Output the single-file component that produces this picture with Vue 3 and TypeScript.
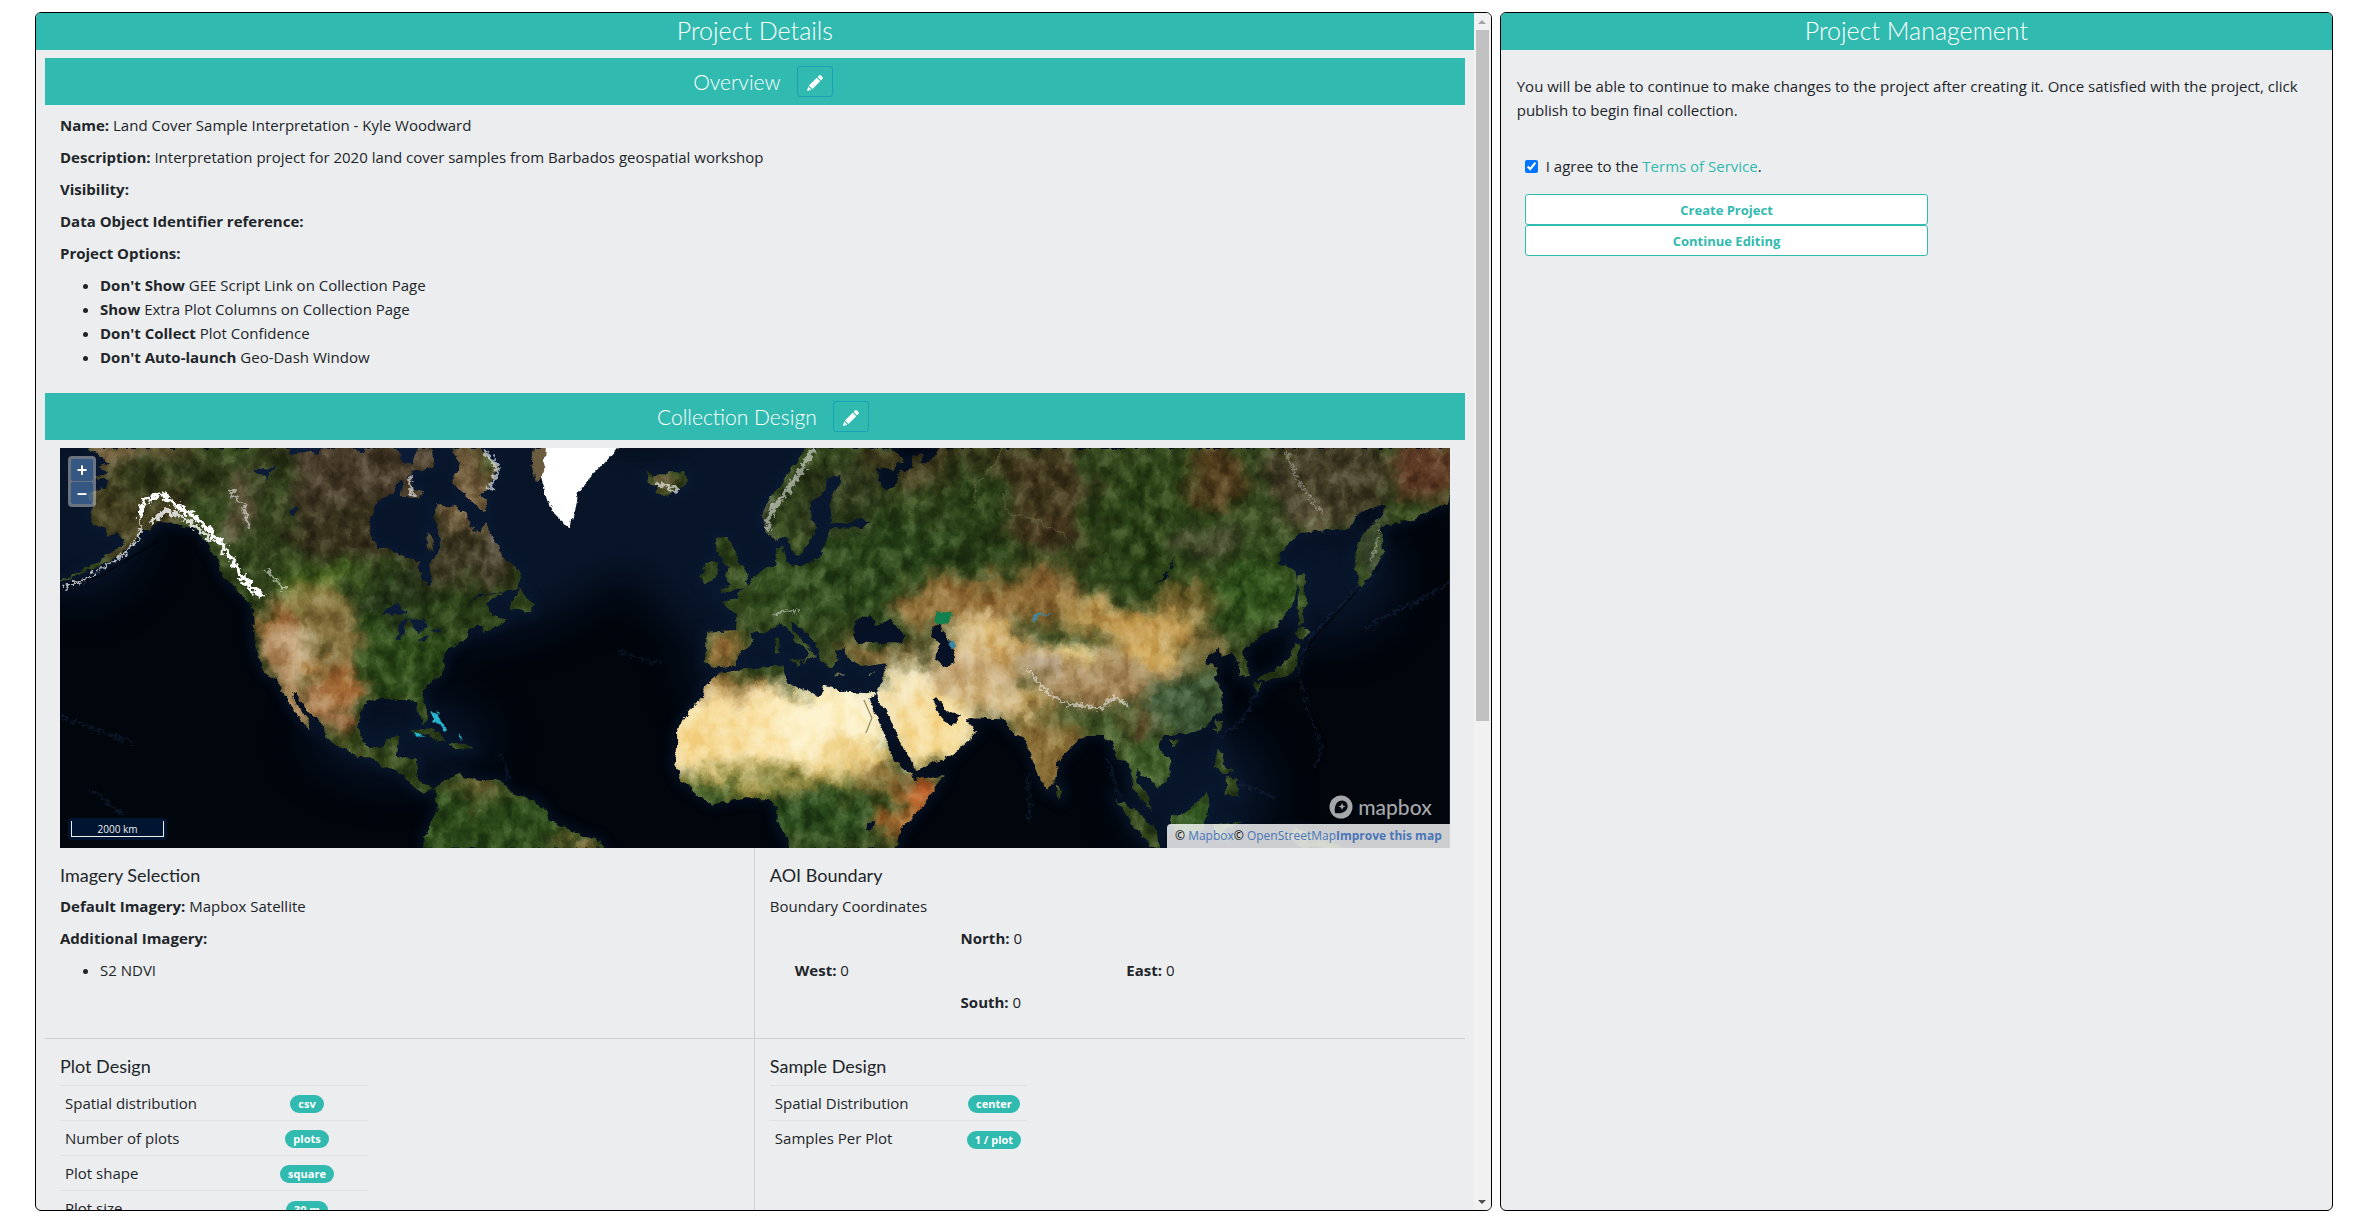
<script setup lang="ts">
import { ref } from 'vue'

interface Patch { x: number; y: number; rx: number; ry: number; fill: string }
interface Row { label: string; value: string }

const agreed = ref(true)

const options = [
  { state: "Don't Show", text: 'GEE Script Link on Collection Page' },
  { state: 'Show', text: 'Extra Plot Columns on Collection Page' },
  { state: "Don't Collect", text: 'Plot Confidence' },
  { state: "Don't Auto-launch", text: 'Geo-Dash Window' },
]

const plotRows: Row[] = [
  { label: 'Spatial distribution', value: 'csv' },
  { label: 'Number of plots', value: 'plots' },
  { label: 'Plot shape', value: 'square' },
  { label: 'Plot size', value: '30 m' },
]

const sampleRows: Row[] = [
  { label: 'Spatial Distribution', value: 'center' },
  { label: 'Samples Per Plot', value: '1 / plot' },
]

const pencil =
  'M12.9 1.6a1.5 1.5 0 0 1 2.1 0l1.4 1.4a1.5 1.5 0 0 1 0 2.1l-1.3 1.3-3.5-3.5zM10.8 3.7l3.5 3.5-7.9 7.9-3.5-3.5zM2.2 12.5l3.3 3.3-4.5 1.2z'

const west = [
  // North and Central America
  'M105 54L130 85L150 100L120 110L145 125L118 140L145 150L140 172L105 185L100 205L118 225L105 245L108 275L135 300L140 320L165 310L180 325L175 345L150 370L120 395L85 425L42 452L42 458L90 432L130 404L170 375L200 340L215 300L235 300L250 275L275 280L300 290L330 295L345 325L362 355L378 390L385 430L400 455L425 490L447 520L452 560L455 620L455 650L465 690L480 735L505 750L515 785L530 820L545 855L560 885L574 898L568 870L552 835L535 800L540 785L560 830L580 860L600 890L612 930L640 955L685 985L705 985L720 1005L755 1020L775 1045L790 1070L810 1088L822 1085L838 1078L820 1068L802 1050L798 1010L800 985L770 985L752 980L755 945L762 918L735 925L728 948L700 955L685 935L675 890L678 850L690 820L715 805L740 808L760 812L785 805L797 820L803 850L812 878L820 870L820 840L810 795L820 765L850 735L858 710L855 690L865 655L890 640L905 625L905 605L930 585L940 605L965 590L990 570L960 560L948 520L960 505L985 488L940 495L905 520L930 495L985 485L1010 480L1022 450L1020 430L1000 400L985 380L965 340L950 290L945 280L930 310L912 290L905 250L880 230L840 225L835 260L848 310L850 350L840 380L825 400L830 450L825 468L808 440L803 395L775 385L750 360L715 350L700 300L700 260L712 220L745 190L765 150L800 120L835 110L830 54Z',
  // Arctic islands
  'M870 54L890 100L872 150L900 200L945 245L948 220L935 195L960 150L972 110L930 54Z',
  'M770 135L785 140L790 180L810 185L805 205L765 200Z',
  'M820 305L835 330L832 365L820 350Z',
  // Iceland
  'M1285 118L1300 145L1320 130L1365 122L1373 150L1368 168L1330 200L1302 188L1310 165L1288 160Z',
  // Newfoundland
  'M1017 470L1010 495L995 535L1045 550L1047 520L1028 500Z',
  // Cuba and Hispaniola
  'M785 905L812 893L840 905L862 930L846 935L820 915Z',
  'M865 942L895 937L918 955L880 958Z',
  // South America
  'M838 1078L848 1060L865 1045L890 1032L900 1045L940 1050L975 1050L990 1075L1010 1095L1045 1105L1065 1130L1080 1170L1110 1190L1150 1215L1185 1230L1195 1256L815 1256L815 1220L835 1160L845 1130L836 1090Z',
]

const east = [
  // Eurasia
  'M495 54L475 100L455 100L460 70L440 80L440 110L415 120L405 155L385 185L370 150L365 115L400 120L420 90L395 54L220 54L190 110L165 170L135 220L128 260L135 310L155 330L175 320L190 370L205 375L220 350L235 310L240 290L228 265L230 220L260 180L262 145L275 135L290 140L288 165L270 200L265 230L275 260L262 280L300 283L340 262L350 280L330 295L270 297L262 330L255 345L245 385L215 405L200 412L180 395L172 350L155 355L158 405L125 425L100 460L80 490L75 508L50 515L55 535L75 550L75 600L15 605L10 700L40 712L75 705L85 670L110 635L105 612L140 605L165 585L180 590L195 630L222 655L225 670L210 705L222 690L240 675L215 635L190 600L190 575L205 590L240 640L250 690L270 715L288 690L275 660L300 655L310 690L335 710L360 705L385 700L375 750L365 790L370 815L385 840L410 930L435 990L442 1022L480 1000L520 975L555 930L570 905L548 870L545 850L520 885L505 875L495 850L480 810L490 805L510 840L550 865L625 868L650 915L670 925L680 960L700 1040L715 1078L735 1050L740 990L775 940L800 915L830 915L850 940L860 985L880 990L890 1040L895 1080L915 1110L930 1140L925 1100L905 1060L900 1020L930 1050L945 1075L972 1040L970 990L945 950L955 915L1000 915L1040 895L1075 840L1080 790L1060 740L1072 710L1045 700L1050 670L1070 655L1075 680L1100 670L1110 700L1115 745L1135 735L1125 690L1120 660L1145 630L1190 590L1225 520L1235 460L1230 420L1190 400L1200 370L1235 310L1290 300L1340 300L1365 240L1415 225L1400 270L1370 310L1350 370L1355 440L1365 470L1390 420L1410 370L1405 290L1470 270L1540 220L1550 180L1550 54Z',
  // Africa
  'M365 790L345 790L300 785L260 768L245 800L215 780L180 760L170 705L130 710L80 720L40 732L11 770L6 800L-23 845L-47 900L-47 960L-54 1000L-38 1050L-8 1090L26 1122L99 1105L138 1105L160 1135L160 1180L180 1225L185 1256L405 1256L410 1210L440 1160L480 1090L502 1035L440 1050L435 1030L400 990L385 930L365 860L350 805Z',
  // British Isles
  'M32 320L58 318L66 350L84 400L100 440L95 470L42 490L62 460L50 440L58 415L40 380L32 350Z',
  'M10 400L38 392L36 440L12 462L2 440Z',
  // Mediterranean islands
  'M155 622L163 620L165 672L155 670Z',
  'M185 690L212 688L205 708Z',
  'M280 730L300 735L282 738Z',
  'M345 738L362 730L352 742Z',
  // Japan, Sakhalin, Taiwan, Hainan
  'M1235 440L1248 430L1248 500L1252 520L1242 535L1244 580L1236 585Z',
  'M1238 590L1262 605L1240 628L1230 615Z',
  'M1228 640L1240 645L1230 700L1222 730L1165 755L1148 748L1190 715L1215 690Z',
  'M1142 755L1158 760L1150 788Z',
  'M1065 870L1076 880L1070 912L1062 895Z',
  'M970 925L988 930L978 955Z',
  // South-east Asian islands and Sri Lanka
  'M1065 955L1080 965L1078 1000L1100 1020L1088 1035L1062 1010Z',
  'M1085 1045L1108 1050L1112 1100L1085 1090Z',
  'M970 1160L1000 1150L1045 1090L1052 1120L1040 1200L1000 1220L975 1200Z',
  'M860 1110L900 1140L940 1200L950 1256L930 1250L890 1180Z',
  'M735 1060L750 1085L742 1106L733 1095Z',
  // Sulawesi and New Guinea
  'M1060 1185L1120 1175L1080 1200L1095 1240L1065 1225Z',
  'M1200 1205L1240 1200L1300 1225L1330 1256L1240 1250Z',
]

const lakes = [
  'M325 565L350 558L362 582L395 572L422 615L420 640L380 640L320 642L314 610Z',
  'M475 590L500 582L500 605L520 640L525 700L503 712L485 690L492 640L478 615Z',
  'M960 450L978 378L974 410L942 462Z',
  'M345 1180L360 1175L355 1205L343 1200Z',
]

const westLakes = [
  'M722 552L755 518L780 545L765 555Z',
  'M765 575L780 565L765 630L757 630Z',
  'M785 565L815 568L822 590L800 612Z',
  'M800 630L828 618L815 632Z',
  'M822 602L852 598L848 608Z',
  'M450 120L500 108L480 150Z',
  'M525 235L545 235L535 262Z',
  'M525 50L605 50L590 72L560 66L530 76Z',
  'M755 50L768 90L790 105L800 50Z',
  'M660 50L690 50L686 70Z',
]

const patches: Patch[] = [
  { x: 310, y: 28, rx: 120, ry: 60, fill: '#483c2a' },
  { x: 60, y: 60, rx: 60, ry: 55, fill: '#464222' },
  { x: 75, y: 2, rx: 60, ry: 12, fill: '#7a6240' },
  { x: 110, y: 25, rx: 60, ry: 20, fill: '#2f3819' },
  { x: 185, y: 58, rx: 14, ry: 36, fill: '#77674f' },
  { x: 215, y: 60, rx: 24, ry: 60, fill: '#2f3d1a' },
  { x: 290, y: 85, rx: 60, ry: 28, fill: '#38321d' },
  { x: 400, y: 100, rx: 60, ry: 60, fill: '#3d3822' },
  { x: 430, y: 88, rx: 8, ry: 30, fill: '#6e6455' },
  { x: 410, y: 40, rx: 26, ry: 46, fill: '#75603f' },
  { x: 258, y: 132, rx: 42, ry: 16, fill: '#496a1f' },
  { x: 252, y: 162, rx: 34, ry: 30, fill: '#857a3d' },
  { x: 268, y: 200, rx: 32, ry: 50, fill: '#8c7843' },
  { x: 282, y: 232, rx: 18, ry: 22, fill: '#a86d38' },
  { x: 222, y: 200, rx: 20, ry: 46, fill: '#b0875a' },
  { x: 238, y: 203, rx: 7, ry: 22, fill: '#e0cba8' },
  { x: 262, y: 208, rx: 7, ry: 16, fill: '#4d4a22' },
  { x: 250, y: 222, rx: 8, ry: 12, fill: '#d09552' },
  { x: 213, y: 168, rx: 10, ry: 14, fill: '#a36d34' },
  { x: 196, y: 170, rx: 6, ry: 46, fill: '#33421c' },
  { x: 350, y: 200, rx: 50, ry: 64, fill: '#2d4a19' },
  { x: 335, y: 148, rx: 44, ry: 24, fill: '#27391a' },
  { x: 400, y: 165, rx: 40, ry: 30, fill: '#2b4018' },
  { x: 265, y: 262, rx: 18, ry: 22, fill: '#b58a5d' },
  { x: 284, y: 282, rx: 10, ry: 14, fill: '#a5683d' },
  { x: 235, y: 262, rx: 10, ry: 30, fill: '#d0a473' },
  { x: 300, y: 308, rx: 30, ry: 12, fill: '#40501f' },
  { x: 430, y: 375, rx: 90, ry: 40, fill: '#2c4a1a' },
  { x: 418, y: 342, rx: 24, ry: 10, fill: '#6c6030' },
  { x: 520, y: 395, rx: 20, ry: 12, fill: '#7e6836' },
  { x: 605, y: 35, rx: 14, ry: 12, fill: '#5a4728' },
  { x: 664, y: 200, rx: 22, ry: 18, fill: '#9c763c' },
  { x: 700, y: 60, rx: 14, ry: 50, fill: '#5d6247' },
  { x: 780, y: 50, rx: 50, ry: 44, fill: '#2e391b' },
  { x: 740, y: 145, rx: 64, ry: 32, fill: '#365021' },
  { x: 830, y: 120, rx: 74, ry: 54, fill: '#2c461b' },
  { x: 880, y: 16, rx: 80, ry: 24, fill: '#3f3b1e' },
  { x: 985, y: 32, rx: 45, ry: 42, fill: '#443a1f' },
  { x: 1000, y: 82, rx: 50, ry: 20, fill: '#46391f' },
  { x: 915, y: 75, rx: 30, ry: 64, fill: '#293f17' },
  { x: 1100, y: 80, rx: 74, ry: 64, fill: '#2c4318' },
  { x: 1160, y: 30, rx: 30, ry: 34, fill: '#55401f' },
  { x: 1270, y: 30, rx: 64, ry: 50, fill: '#453f28' },
  { x: 1245, y: 70, rx: 26, ry: 9, fill: '#73684c' },
  { x: 1370, y: 20, rx: 35, ry: 34, fill: '#613e27' },
  { x: 1150, y: 95, rx: 40, ry: 12, fill: '#4d4e33' },
  { x: 1315, y: 100, rx: 6, ry: 30, fill: '#66705b' },
  { x: 930, y: 152, rx: 95, ry: 22, fill: '#967139' },
  { x: 860, y: 168, rx: 26, ry: 16, fill: '#9d7e45' },
  { x: 985, y: 140, rx: 26, ry: 24, fill: '#8b6734' },
  { x: 920, y: 198, rx: 42, ry: 34, fill: '#dcc28c' },
  { x: 960, y: 208, rx: 36, ry: 22, fill: '#c6a266' },
  { x: 935, y: 190, rx: 18, ry: 12, fill: '#dcb86f' },
  { x: 1035, y: 168, rx: 36, ry: 14, fill: '#c09b54' },
  { x: 1095, y: 182, rx: 55, ry: 20, fill: '#c8a157' },
  { x: 1130, y: 150, rx: 30, ry: 18, fill: '#6c5d28' },
  { x: 1040, y: 218, rx: 90, ry: 20, fill: '#b39a68' },
  { x: 1085, y: 205, rx: 22, ry: 10, fill: '#d9b262' },
  { x: 1034, y: 238, rx: 60, ry: 20, fill: '#a88a5c' },
  { x: 1010, y: 206, rx: 26, ry: 11, fill: '#f4dc98' },
  { x: 985, y: 218, rx: 14, ry: 12, fill: '#b9a68d' },
  { x: 905, y: 235, rx: 52, ry: 32, fill: '#c9ac7b' },
  { x: 935, y: 252, rx: 34, ry: 18, fill: '#d6bb88' },
  { x: 810, y: 208, rx: 38, ry: 10, fill: '#9b7c46' },
  { x: 856, y: 202, rx: 22, ry: 8, fill: '#5b5029' },
  { x: 846, y: 255, rx: 32, ry: 40, fill: '#f5e5b8' },
  { x: 875, y: 284, rx: 40, ry: 38, fill: '#f6de9e' },
  { x: 700, y: 282, rx: 120, ry: 48, fill: '#fae6b0' },
  { x: 770, y: 275, rx: 50, ry: 44, fill: '#fcf1ca' },
  { x: 650, y: 288, rx: 40, ry: 32, fill: '#f6db98' },
  { x: 795, y: 308, rx: 40, ry: 18, fill: '#f0d48c' },
  { x: 670, y: 236, rx: 50, ry: 9, fill: '#b58e50' },
  { x: 700, y: 332, rx: 120, ry: 9, fill: '#a39748' },
  { x: 820, y: 332, rx: 24, ry: 14, fill: '#94773a' },
  { x: 650, y: 350, rx: 64, ry: 12, fill: '#3c5a25' },
  { x: 770, y: 368, rx: 74, ry: 26, fill: '#2d4d1e' },
  { x: 858, y: 348, rx: 20, ry: 20, fill: '#c7682f' },
  { x: 838, y: 378, rx: 18, ry: 16, fill: '#b07336' },
  { x: 972, y: 262, rx: 20, ry: 16, fill: '#d3b773' },
  { x: 985, y: 300, rx: 36, ry: 40, fill: '#8f743b' },
  { x: 1025, y: 272, rx: 40, ry: 7, fill: '#475a2a' },
  { x: 1060, y: 300, rx: 18, ry: 40, fill: '#4a602e' },
  { x: 1095, y: 315, rx: 24, ry: 34, fill: '#3f5c28' },
  { x: 1085, y: 272, rx: 14, ry: 12, fill: '#7b5836' },
  { x: 1130, y: 258, rx: 42, ry: 32, fill: '#3e5734' },
  { x: 1150, y: 205, rx: 22, ry: 18, fill: '#7a6d3c' },
  { x: 1195, y: 145, rx: 40, ry: 36, fill: '#30521b' },
  { x: 1150, y: 380, rx: 40, ry: 30, fill: '#30551f' },
]
</script>

<template>
  <main class="page">
    <section class="panel details">
      <div class="scroller">
        <h1 class="panel-title">Project Details</h1>
        <div class="content">
          <header class="bar">
            <h2>Overview</h2>
            <button type="button" class="edit" aria-label="Edit overview">
              <svg viewBox="0 0 18 18"><path :d="pencil" /></svg>
            </button>
          </header>
          <div class="overview">
            <p><b>Name:</b> Land Cover Sample Interpretation - Kyle Woodward</p>
            <p><b>Description:</b> Interpretation project for 2020 land cover samples from Barbados geospatial workshop</p>
            <p><b>Visibility:</b></p>
            <p><b>Data Object Identifier reference:</b></p>
            <p><b>Project Options:</b></p>
            <ul>
              <li v-for="o in options" :key="o.text"><b>{{ o.state }}</b> {{ o.text }}</li>
            </ul>
          </div>

          <header class="bar">
            <h2>Collection Design</h2>
            <button type="button" class="edit" aria-label="Edit collection design">
              <svg viewBox="0 0 18 18"><path :d="pencil" /></svg>
            </button>
          </header>

          <div class="map">
            <svg class="imagery" viewBox="0 0 1390 400" preserveAspectRatio="xMidYMid slice" aria-hidden="true">
              <defs>
                <clipPath id="land">
                  <path v-for="(d, i) in west" :key="'w' + i" :d="d" transform="translate(-20 -18) scale(.4719 .3333)" />
                  <path v-for="(d, i) in east" :key="'e' + i" :d="d" transform="translate(640 -18) scale(.4847 .3333)" />
                </clipPath>
                <filter id="rough" x="0" y="0" width="1390" height="400" filterUnits="userSpaceOnUse" color-interpolation-filters="sRGB">
                  <feTurbulence type="fractalNoise" baseFrequency=".12" numOctaves="4" seed="4" />
                  <feDisplacementMap in="SourceGraphic" scale="7" xChannelSelector="R" yChannelSelector="G" />
                </filter>
                <filter id="soft" x="-40" y="-40" width="1470" height="480" filterUnits="userSpaceOnUse" color-interpolation-filters="sRGB">
                  <feGaussianBlur stdDeviation="8" result="b" />
                  <feTurbulence type="fractalNoise" baseFrequency=".03" numOctaves="5" seed="9" />
                  <feDisplacementMap in="b" scale="40" xChannelSelector="R" yChannelSelector="G" />
                </filter>
                <filter id="glow" x="-60" y="-60" width="1510" height="520" filterUnits="userSpaceOnUse" color-interpolation-filters="sRGB">
                  <feGaussianBlur stdDeviation="22" />
                </filter>
                <filter id="shore" x="-20" y="-20" width="1430" height="440" filterUnits="userSpaceOnUse" color-interpolation-filters="sRGB">
                  <feGaussianBlur stdDeviation="5" />
                </filter>
                <filter id="grain" x="0" y="0" width="1390" height="400" filterUnits="userSpaceOnUse" color-interpolation-filters="sRGB">
                  <feTurbulence type="fractalNoise" baseFrequency=".07 .05" numOctaves="6" seed="11" />
                  <feColorMatrix values="1.8 0 0 0 -.42  1.8 0 0 0 -.42  1.8 0 0 0 -.42  0 0 0 0 1" />
                </filter>
                <filter id="snowy" x="0" y="0" width="1390" height="400" filterUnits="userSpaceOnUse" color-interpolation-filters="sRGB">
                  <feTurbulence type="fractalNoise" baseFrequency=".2" numOctaves="3" seed="7" />
                  <feDisplacementMap in="SourceGraphic" scale="12" xChannelSelector="R" yChannelSelector="G" result="d" />
                  <feGaussianBlur in="d" stdDeviation=".6" />
                </filter>
              </defs>
              <rect width="1390" height="400" fill="#01050c" />
              <g filter="url(#glow)" fill="#081529">
                <ellipse cx="390" cy="60" rx="190" ry="130" />
                <ellipse cx="700" cy="80" rx="130" ry="130" />
                <ellipse cx="1260" cy="130" rx="80" ry="60" />
                <ellipse cx="20" cy="60" rx="70" ry="90" />
                <ellipse cx="570" cy="60" rx="120" ry="70" />
                <ellipse cx="1140" cy="345" rx="70" ry="70" />
                <ellipse cx="760" cy="225" rx="130" ry="50" />
                <ellipse cx="340" cy="290" rx="90" ry="40" />
              </g>
              <g filter="url(#shore)" fill="none" stroke="#0b1d39" opacity=".5">
                <g transform="translate(-20 -18) scale(.4719 .3333)" stroke-width="24">
                  <path v-for="(d, i) in west" :key="i" :d="d" />
                </g>
                <g transform="translate(640 -18) scale(.4847 .3333)" stroke-width="24">
                  <path v-for="(d, i) in east" :key="i" :d="d" />
                </g>
              </g>
              <g fill="none" stroke="#1b3050" stroke-width="2" opacity=".4" filter="url(#snowy)">
                <path d="M0 268L45 285L75 295" />
                <path d="M1305 180L1390 135M1322 115L1250 190L1238 230L1262 300L1255 320" />
                <path d="M1160 290L1185 270L1200 235M968 325L970 375M1048 310L1060 350M440 305L450 330L435 335" />
                <path d="M1180 335L1215 350M560 205L600 215M30 340L65 368" />
              </g>
              <path fill="none" stroke="#000104" stroke-width="2" opacity=".5" d="M0 138L40 128L100 92M1322 115L1250 195L1238 235L1268 300L1255 325" />
              <g filter="url(#rough)">
                <g clip-path="url(#land)">
                  <rect width="1390" height="400" fill="#33471d" />
                  <g filter="url(#soft)">
                    <rect x="-40" y="-40" width="1470" height="480" fill="#33471d" />
                    <ellipse v-for="(p, i) in patches" :key="i" :cx="p.x" :cy="p.y" :rx="p.rx" :ry="p.ry" :fill="p.fill" />
                  </g>
                  <rect class="grain" width="1390" height="400" filter="url(#grain)" />
                </g>
                <g transform="translate(640 -18) scale(.4847 .3333)" fill="#061126">
                  <path v-for="(d, i) in lakes" :key="i" :d="d" />
                  <path fill="#12804f" d="M490 550L520 545L515 575L495 585L483 568Z" />
                  <path fill="#3f87a0" d="M515 630L528 645L518 655ZM685 575L690 552L728 550L700 558L692 580Z" />
                </g>
                <g transform="translate(-20 -18) scale(.4719 .3333)" fill="#0c1c38">
                  <path v-for="(d, i) in westLakes" :key="i" :d="d" />
                </g>
                <path fill="#fff" d="M485 -5L480 25L486 45L494 66L502 74L510 79L516 60L518 45L528 32L542 18L558 0V-5Z" />
                <path fill="#6b5c40" d="M474 0H486L484 24L476 34L472 14Z" />
              </g>
              <g fill="none" stroke="#fff" stroke-linecap="round" filter="url(#snowy)">
                <path stroke-width="5" d="M80 66L86 52L102 46L118 58L134 68L146 78L158 92L170 108L180 126L192 140L200 147" />
                <path stroke-width="4" opacity=".8" d="M92 74L106 62L124 70L140 82L150 92" />
                <path stroke-width="2" opacity=".7" d="M80 70L80 88L66 104L44 120L20 134L4 140" />
                <path stroke-width="3" opacity=".5" d="M206 122L216 132L226 142M170 42L182 56L190 80" />
                <path stroke-width="5" opacity=".5" d="M752 2L742 22L726 44L712 62L708 80" />
                <path stroke-width="3" opacity=".5" d="M968 222L986 244L1008 256L1042 260L1054 250L1068 258" />
                <path stroke-width="2" opacity=".4" d="M712 168L724 162L738 164" />
                <path stroke-width="4" opacity=".6" d="M426 4L438 22L430 40M350 30L352 46M600 36L616 42" />
                <path stroke-width="2" opacity=".3" d="M1226 4L1240 36L1262 66M1320 84L1312 112" />
              </g>
              <g fill="none" stroke="#7d7350" stroke-width="1" opacity=".6" filter="url(#rough)">
                <path d="M942 0L932 20L916 38L914 60M940 40L950 66L975 70L1000 84L1014 100" />
              </g>
              <g fill="none" stroke="#22351a" stroke-width="5" opacity=".55" filter="url(#shore)">
                <path d="M910 80L908 135M1028 10L1032 70L1060 105L1090 135M1010 90L1030 125" />
              </g>
              <path fill="none" stroke="#6c6a3c" stroke-width="1" d="M804 252L812 270L806 285" />
              <g fill="#25b5cf" filter="url(#rough)">
                <path d="M372 264l6 2 4 10 6 6-2 2-8-6-6-6zM354 284l8 2 2 3-7-1zM398 286l4 2-1 3zM376 262l4 2-1 2z" />
              </g>
            </svg>

            <div class="zoom">
              <button type="button" aria-label="Zoom in">+</button>
              <button type="button" aria-label="Zoom out">–</button>
            </div>
            <div class="scale"><span>2000 km</span></div>
            <div class="logo">
              <svg viewBox="0 0 24 24" aria-hidden="true">
                <circle cx="12" cy="12" r="11.5" fill="#a5a7aa" />
                <path fill="#05080f" d="M6 18C5 12 7 5.500 13.500 5.500a5.500 5.500 0 0 1 5 7C17.500 17 12 19 6 18z" />
                <path fill="#a5a7aa" d="M13 8l1 2.500 2.500 1-2.500 1-1 2.500-1-2.500-2.500-1 2.500-1z" />
              </svg>
              <span>mapbox</span>
            </div>
            <div class="credit">© <a href="#">Mapbox</a>© <a href="#">OpenStreetMap</a><a href="#"><b>Improve this map</b></a></div>
          </div>

          <div class="grid">
            <section class="cell">
              <h3>Imagery Selection</h3>
              <p><b>Default Imagery:</b> Mapbox Satellite</p>
              <p><b>Additional Imagery:</b></p>
              <ul><li>S2 NDVI</li></ul>
            </section>
            <section class="cell">
              <h3>AOI Boundary</h3>
              <p>Boundary Coordinates</p>
              <div class="compass">
                <p class="mid"><b>North:</b> 0</p>
                <p class="west"><b>West:</b> 0</p>
                <p class="east"><b>East:</b> 0</p>
                <p class="mid"><b>South:</b> 0</p>
              </div>
            </section>
            <section class="cell">
              <h3>Plot Design</h3>
              <table class="plot">
                <tbody>
                  <tr v-for="r in plotRows" :key="r.label">
                    <td>{{ r.label }}</td>
                    <td><span class="badge">{{ r.value }}</span></td>
                  </tr>
                </tbody>
              </table>
            </section>
            <section class="cell">
              <h3>Sample Design</h3>
              <table class="sample">
                <tbody>
                  <tr v-for="r in sampleRows" :key="r.label">
                    <td>{{ r.label }}</td>
                    <td><span class="badge">{{ r.value }}</span></td>
                  </tr>
                </tbody>
              </table>
            </section>
          </div>
        </div>
      </div>
      <div class="scrollbar" aria-hidden="true">
        <i class="up"></i>
        <div class="track"><div class="thumb"></div></div>
        <i class="down"></i>
      </div>
    </section>

    <section class="panel manage">
      <h1 class="panel-title">Project Management</h1>
      <p class="note">
        You will be able to continue to make changes to the project after creating it. Once satisfied with the
        project, click publish to begin final collection.
      </p>
      <div class="actions">
        <div class="agree">
          <input id="tos" v-model="agreed" type="checkbox" />
          <label for="tos">I agree to the <a href="#">Terms of Service</a>.</label>
        </div>
        <button type="button" class="action">Create Project</button>
        <button type="button" class="action">Continue Editing</button>
      </div>
    </section>
  </main>
</template>

<style>
body {
  margin: 0;
  background: #fff;
}
</style>

<style scoped>
* {
  box-sizing: border-box;
}
.page {
  display: flex;
  gap: 8px;
  height: 100vh;
  padding: 12px 23px 15px 35px;
  color: #212529;
  font: 15px/24px "Open Sans", "Noto Sans", sans-serif;
}
.panel {
  min-width: 0;
  overflow: hidden;
  background: #ecedef;
  border: 1px solid #000;
  border-radius: 6px;
}
.details {
  display: flex;
  flex: 7 1 0;
}
.manage {
  flex: 4 1 0;
}
.scroller {
  flex: 1;
  min-width: 0;
  overflow-y: auto;
  scrollbar-width: none;
}
h1,
h2,
h3,
p,
ul {
  margin: 0;
}
h1,
h2,
h3 {
  font-family: Lato, sans-serif;
  font-weight: 300;
}
.panel-title {
  height: 37px;
  background: #31bab0;
  color: #fff;
  font-size: 25px;
  line-height: 34px;
  text-align: center;
}
.content {
  padding: 8px 9px;
}
.bar {
  display: flex;
  align-items: center;
  justify-content: center;
  gap: 16px;
  height: 47px;
  padding-left: 16px;
  background: #31bab0;
  color: #fff;
}
h2 {
  font-size: 21px;
  line-height: 28px;
}
.edit {
  width: 36px;
  height: 31px;
  padding: 0;
  background: transparent;
  border: 1px solid #17a2b8;
  border-radius: 3px;
}
.edit svg {
  display: block;
  width: 18px;
  height: 18px;
  margin: 2px auto 0;
  fill: #fff;
}
.overview {
  padding: 8px 15px;
}
.overview ul {
  padding-bottom: 16px;
}
p {
  margin-bottom: 8px;
}
ul {
  padding-left: 40px;
}
.map {
  position: relative;
  height: 400px;
  margin: 8px 15px 0;
  overflow: hidden;
}
.imagery {
  display: block;
  width: 100%;
  height: 100%;
}
.grain {
  mix-blend-mode: soft-light;
  opacity: 0.5;
}
.zoom {
  position: absolute;
  top: 8px;
  left: 8px;
  display: grid;
  gap: 1px;
  padding: 3px;
  background: rgba(255, 255, 255, 0.4);
  border-radius: 4px;
}
.zoom button {
  width: 22px;
  height: 22px;
  padding: 0;
  background: rgba(0, 60, 136, 0.5);
  border: 0;
  border-radius: 2px;
  color: #fff;
  font: bold 18px/20px "Liberation Sans", sans-serif;
}
.scale {
  position: absolute;
  bottom: 8px;
  left: 8px;
  width: 99px;
  padding: 3px;
  background: rgba(0, 60, 136, 0.3);
  border-radius: 4px;
}
.scale span {
  display: block;
  height: 16px;
  border: 1px solid #eee;
  border-top: 0;
  color: #eee;
  font-size: 10px;
  line-height: 16px;
  text-align: center;
}
.logo {
  position: absolute;
  right: 18px;
  bottom: 28px;
  display: flex;
  align-items: center;
  gap: 5px;
  color: #a5a7aa;
  font: 500 21px/26px Lato, sans-serif;
}
.logo svg {
  width: 24px;
  height: 24px;
}
.credit {
  position: absolute;
  right: 0;
  bottom: 0;
  padding: 0 8px;
  background: rgba(255, 255, 255, 0.8);
  border-radius: 4px 0 0;
  color: #000;
  font-size: 12px;
  white-space: nowrap;
}
.credit a {
  color: #4a76b8;
  text-decoration: none;
}
.grid {
  display: grid;
  grid-template-columns: 1fr 1fr;
}
.cell {
  padding: 16px 15px;
  border-bottom: 1px solid #cfd2d5;
}
.cell:nth-child(odd) {
  border-right: 1px solid #cfd2d5;
}
.cell:nth-child(n + 3) {
  border-bottom: 0;
}
h3 {
  margin-bottom: 8px;
  font-size: 18px;
  font-weight: 400;
  line-height: 22px;
}
.compass {
  display: grid;
  grid-template-columns: repeat(4, 1fr);
  margin: 0 -8px 0 25px;
}
.mid {
  grid-column: 2 / 5;
}
.east {
  grid-column: 3 / 5;
}
table {
  border-collapse: collapse;
  table-layout: fixed;
}
td {
  height: 35px;
  padding: 4px 5px 5px;
  border-top: 1px solid #dee2e6;
}
td:last-child {
  text-align: center;
}
.plot {
  width: 308px;
}
.plot td:last-child {
  width: 122px;
}
.sample {
  width: 257px;
}
.sample td:last-child {
  width: 66px;
  padding: 4px 0 5px;
}
.badge {
  display: inline-block;
  padding: 0 8px;
  background: #31bab0;
  border-radius: 9px;
  color: #fff;
  font-size: 11px;
  font-weight: 700;
  line-height: 18px;
  vertical-align: middle;
}
.scrollbar {
  display: flex;
  flex-direction: column;
  align-items: center;
  width: 17px;
  background: #f1f1f1;
}
.up,
.down {
  width: 0;
  margin: 7px 0 6px;
  border: 4px solid transparent;
}
.up {
  border-top: 0;
  border-bottom-color: #a3a3a3;
}
.down {
  border-bottom: 0;
  border-top-color: #505050;
}
.track {
  flex: 1;
  width: 13px;
}
.thumb {
  height: 59.4%;
  background: #c1c1c1;
}
.note {
  margin: 24px 16px 32px;
}
.actions {
  display: flex;
  flex-direction: column;
  align-items: flex-start;
  padding-left: 24px;
}
.agree {
  display: flex;
  align-items: center;
  gap: 8px;
  margin-bottom: 16px;
}
.agree input {
  width: 13px;
  height: 13px;
  margin: 0;
  accent-color: #0075ff;
}
.agree a {
  color: #31bab0;
  text-decoration: none;
}
.action {
  width: 50%;
  height: 31px;
  padding: 0;
  background: #fff;
  border: 1px solid #31bab0;
  border-radius: 3px;
  color: #31bab0;
  font: bold 13px/20px "Open Sans", "Noto Sans", sans-serif;
}
</style>
